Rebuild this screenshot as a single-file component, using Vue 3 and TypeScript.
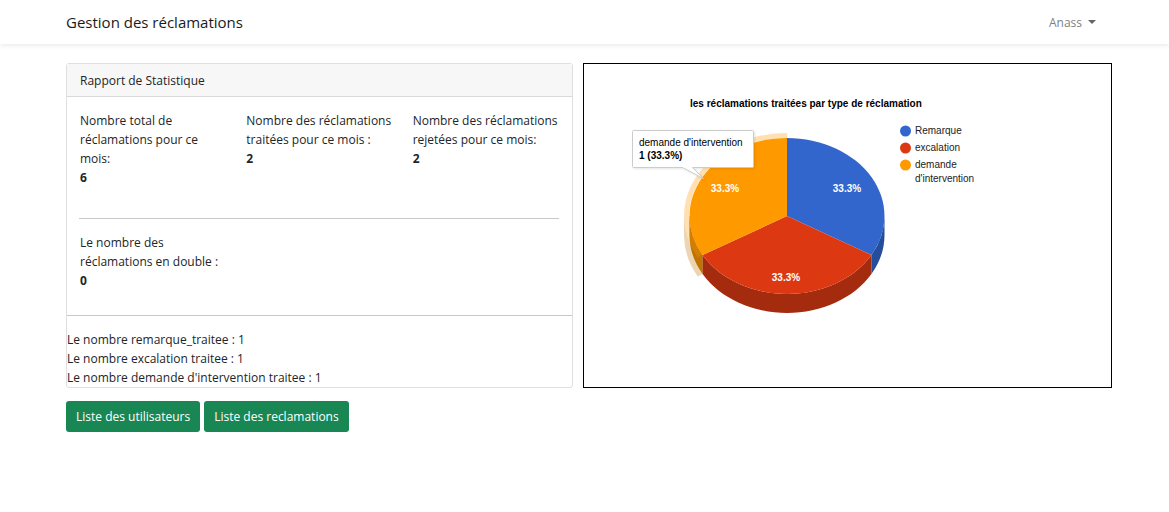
<script setup lang="ts">
interface Stat {
  label: string
  value: number
}

interface LegendEntry {
  lines: string[]
  color: string
  y: number
}

const monthly: Stat[] = [
  { label: 'Nombre total de réclamations pour ce mois:', value: 6 },
  { label: 'Nombre des réclamations traitées pour ce mois :', value: 2 },
  { label: 'Nombre des réclamations rejetées pour ce mois:', value: 2 },
]

const duplicates: Stat[] = [{ label: 'Le nombre des réclamations en double :', value: 0 }]

const handled: Stat[] = [
  { label: 'Le nombre remarque_traitee', value: 1 },
  { label: 'Le nombre excalation traitee', value: 1 },
  { label: "Le nombre demande d'intervention traitee", value: 1 },
]

const legend: LegendEntry[] = [
  { lines: ['Remarque'], color: '#3366cc', y: 67 },
  { lines: ['excalation'], color: '#dc3912', y: 84 },
  { lines: ['demande', "d'intervention"], color: '#ff9900', y: 101 },
]

const ring = 'M203 71.5A100.5 80.5 0 0 0 102.5 152A100.5 80.5 0 0 0 116 192'
const orangeSide = 'M105.5 152A97.5 78 0 0 0 118.6 191V210A97.5 78 0 0 1 105.5 171Z'
</script>

<template>
  <div class="page">
    <header class="navbar">
      <a class="brand" href="#">Gestion des réclamations</a>
      <button class="user" type="button">Anass<span class="caret"></span></button>
    </header>

    <main class="content">
      <div class="panels">
        <section class="card">
          <h2 class="card-header">Rapport de Statistique</h2>
          <div class="card-body">
            <div class="row">
              <div v-for="stat in monthly" :key="stat.label" class="stat">
                {{ stat.label }}<br /><strong>{{ stat.value }}</strong>
              </div>
            </div>
            <hr class="rule" />
            <div class="row">
              <div v-for="stat in duplicates" :key="stat.label" class="stat">
                {{ stat.label }}<br /><strong>{{ stat.value }}</strong>
              </div>
            </div>
          </div>
          <hr class="rule" />
          <div v-for="stat in handled" :key="stat.label">{{ stat.label }} : {{ stat.value }}</div>
        </section>

        <section class="chart">
          <svg viewBox="0 0 527 323" role="img" aria-label="les réclamations traitées par type de réclamation">
            <defs>
              <clipPath id="orange-side"><path :d="orangeSide" /></clipPath>
            </defs>

            <text class="bold" x="106" y="43">les réclamations traitées par type de réclamation</text>

            <g v-for="entry in legend" :key="entry.color">
              <circle cx="321.5" :cy="entry.y" r="5.5" :fill="entry.color" />
              <text v-for="(line, i) in entry.lines" :key="line" class="label" x="331" :y="entry.y + 3 + i * 14">
                {{ line }}
              </text>
            </g>

            <path d="M100 152V171A103 83 0 0 0 113.8 212.5L118.6 210V191L106 152Z" fill="#ecd5b3" />
            <path :d="ring" fill="none" stroke="#ffe0b3" stroke-width="5" />
            <path :d="orangeSide" fill="#bf7300" />
            <path :d="ring" clip-path="url(#orange-side)" fill="none" stroke="#ff9900" stroke-opacity="0.3" stroke-width="5" />
            <path d="M300.5 152A97.5 78 0 0 1 287.4 191V210A97.5 78 0 0 0 300.5 171Z" fill="#264d99" />
            <path d="M118.6 191A97.5 78 0 0 0 287.4 191V210A97.5 78 0 0 1 118.6 210Z" fill="#a52b0e" />
            <path d="M203 152V74A97.5 78 0 0 1 287.4 191Z" fill="#3366cc" />
            <path d="M203 152L287.4 191A97.5 78 0 0 1 118.6 191Z" fill="#dc3912" />
            <path d="M203 152L118.6 191A97.5 78 0 0 1 203 74Z" fill="#ff9900" />

            <g class="slice">
              <text x="141" y="128">33.3%</text>
              <text x="263" y="128">33.3%</text>
              <text x="202" y="217">33.3%</text>
            </g>

            <g class="tooltip">
              <path d="M49.5 66.5H168.5Q169.5 66.5 169.5 67.5V102.5Q169.5 103.5 168.5 103.5H108.5L119.5 114.5L98.5 103.5H49.5Q48.5 103.5 48.5 102.5V67.5Q48.5 66.5 49.5 66.5Z" fill="#fff" stroke="#ccc" />
              <text x="55" y="82">demande d'intervention</text>
              <text class="bold" x="55" y="95">1 (33.3%)</text>
            </g>
          </svg>
        </section>
      </div>

      <nav class="actions">
        <a class="btn" href="#">Liste des utilisateurs</a>
        <a class="btn" href="#">Liste des reclamations</a>
      </nav>
    </main>
  </div>
</template>

<style>
body {
  margin: 0;
  background: #fff;
}
</style>

<style scoped>
.page {
  font-family: "Segoe UI", "Open Sans", "Noto Sans", sans-serif;
  font-size: 12px;
  line-height: 19px;
  color: #212529;
}

.navbar {
  display: flex;
  align-items: center;
  justify-content: space-between;
  height: 44px;
  padding: 0 73px 0 66px;
  box-shadow: 0 2px 4px rgba(0, 0, 0, 0.075);
}

.brand {
  font-size: 15px;
  color: #1a1a1a;
  text-decoration: none;
}

.user {
  display: flex;
  align-items: center;
  gap: 6px;
  padding: 0;
  border: 0;
  background: none;
  font: inherit;
  color: #7f7f7f;
}

.caret {
  border: 4px solid transparent;
  border-top-color: #666;
  border-bottom: 0;
}

.content {
  padding: 19px 57px 0 66px;
}

.panels {
  display: grid;
  grid-template-columns: 507fr 529fr;
  gap: 10px;
}

.card {
  box-sizing: border-box;
  border: 1px solid #dfdfdf;
  border-radius: 3px;
}

.card-header {
  margin: 0;
  padding: 7px 13px 6px;
  border-bottom: 1px solid #d9d9d9;
  background: #f7f7f7;
  font-size: 12px;
  font-weight: 400;
}

.card-body {
  padding: 14px 13px 25px 12px;
}

.row {
  display: grid;
  grid-template-columns: repeat(3, 1fr);
  gap: 20px;
  padding-left: 1px;
}

.rule {
  margin: 0 0 14px;
  border: 0;
  border-top: 1px solid #c8c8c8;
}

.card-body .rule {
  margin-top: 31px;
}

.chart {
  box-sizing: border-box;
  border: 1px solid #000;
}

.chart svg {
  display: block;
  width: 100%;
  font-family: "Liberation Sans", Arial, sans-serif;
  font-size: 10px;
}

.bold {
  font-weight: 700;
}

.label {
  fill: #222;
}

.slice {
  fill: #fff;
  font-weight: 700;
  text-anchor: middle;
}

.tooltip path {
  filter: drop-shadow(1px 1px 1px rgba(0, 0, 0, 0.1));
}

.actions {
  display: flex;
  gap: 4px;
  margin-top: 13px;
}

.btn {
  padding: 6px 10px;
  border-radius: 3px;
  background: #198754;
  color: #fff;
  text-decoration: none;
}
</style>
